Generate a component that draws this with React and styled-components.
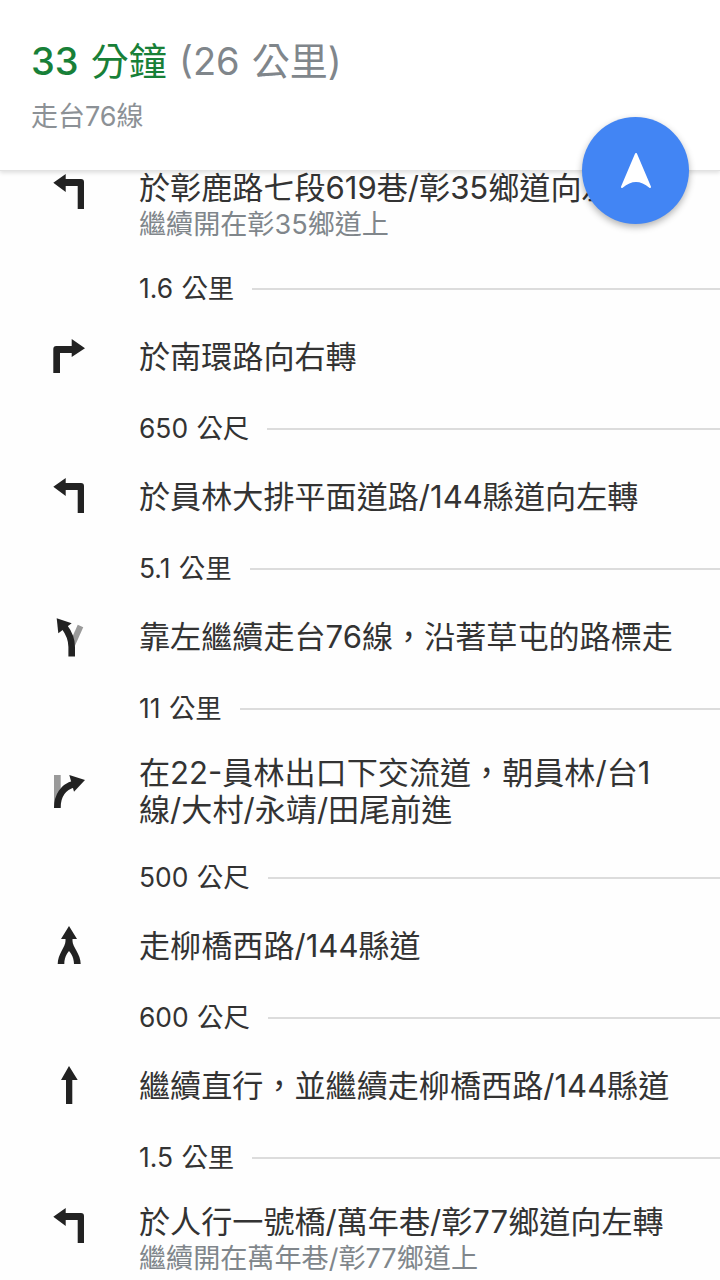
import React from 'react';
import styled, { createGlobalStyle } from 'styled-components';

const GlobalStyle = createGlobalStyle`
	html, body {
		margin: 0;
		padding: 0;
		background: #fefefe;
	}
	body {
		font-family: Inter, "Noto Sans CJK TC", sans-serif;
	}
`;

const steps = [
	{ id: 1, type: 'left', title: '於彰鹿路七段619巷/彰35鄉道向左轉', sub: '繼續開在彰35鄉道上', distance: '1.6 公里', first: true },
	{ id: 2, type: 'right', title: '於南環路向右轉', distance: '650 公尺' },
	{ id: 3, type: 'left', title: '於員林大排平面道路/144縣道向左轉', distance: '5.1 公里' },
	{ id: 4, type: 'keepLeft', title: '靠左繼續走台76線，沿著草屯的路標走', distance: '11 公里' },
	{ id: 5, type: 'exitRight', title: '在22-員林出口下交流道，朝員林/台1線/大村/永靖/田尾前進', distance: '500 公尺' },
	{ id: 6, type: 'merge', title: '走柳橋西路/144縣道', distance: '600 公尺' },
	{ id: 7, type: 'straight', title: '繼續直行，並繼續走柳橋西路/144縣道', distance: '1.5 公里' },
	{ id: 8, type: 'left', title: '於人行一號橋/萬年巷/彰77鄉道向左轉', sub: '繼續開在萬年巷/彰77鄉道上' },
];

const TurnIcon = ({ type }) => {
	const dark = '#222';
	const grey = '#9a9a9a';
	return (
		<IconSvg viewBox="0 0 40 44">
			{type === 'left' && (
				<path
					fill={dark}
					d="M4.3 11.7 L16.7 3 V8 H32 Q35 8 35 11 V38 H28.7 V15 H16.7 V21 Z"
				/>
			)}
			{type === 'right' && (
				<path
					fill={dark}
					d="M36 13.2 L22.7 4 V11 H7.3 Q4.3 11 4.3 14 V38 H11 V18 H22.7 V22 Z"
				/>
			)}
			{type === 'keepLeft' && (
				<>
					<path d="M23 30 L31.5 11" stroke={grey} strokeWidth="6" fill="none" />
					<path d="M22.7 41.5 V32 C22.7 24 20 18 15.5 12" stroke={dark} strokeWidth="6.6" fill="none" />
					<path fill={dark} d="M7.7 3.3 L22.7 8.3 L9.3 18.3 Z" />
				</>
			)}
			{type === 'exitRight' && (
				<>
					<rect x="5" y="5" width="6.7" height="33" fill={grey} />
					<path d="M8.3 38 C8.3 26 14 17 25 14" stroke={dark} strokeWidth="6.6" fill="none" />
					<path fill={dark} d="M36 10 L20.3 5 L25 21.7 Z" />
				</>
			)}
			{type === 'merge' && (
				<path
					fill={dark}
					d="M20 2 L28 15 H23.5 V17 C23.5 23 31.7 30 31.7 40 H25 C25 32 20 27 20 27 C20 27 15.3 32 15.3 40 H8.7 C8.7 30 16.5 23 16.5 17 V15 H12 Z"
				/>
			)}
			{type === 'straight' && (
				<path fill={dark} d="M20 2 L28.7 16 H23.3 V40 H17 V16 H12 Z" />
			)}
		</IconSvg>
	);
};

const App = () => {
	return (
		<Page>
			<GlobalStyle />
			<Header>
				<Summary>
					<Duration>
						<Digits>33</Digits> 分鐘
					</Duration>{' '}
					(26 公里)
				</Summary>
				<Via>走台76線</Via>
			</Header>
			<NavButton>
				<svg width="34" height="38" viewBox="0 0 34 38">
					<path
						fill="#fff"
						stroke="#fff"
						strokeWidth="2"
						strokeLinejoin="round"
						d="M17 2 L31 35 Q24 29 17 29 Q10 29 3 35 Z"
					/>
				</svg>
			</NavButton>
			<StepList>
				{steps.map((step) => (
					<li key={step.id}>
						<Step $first={step.first}>
							<IconCell $top={!!step.sub}>
								<TurnIcon type={step.type} />
							</IconCell>
							<StepText>
								<Title>{step.title}</Title>
								{step.sub && <SubTitle>{step.sub}</SubTitle>}
							</StepText>
						</Step>
						{step.distance && (
							<DistanceRow>
								<Distance>{step.distance}</Distance>
								<Line />
							</DistanceRow>
						)}
					</li>
				))}
			</StepList>
		</Page>
	);
};

export default App;

const Page = styled.div`
	position: relative;
	width: 720px;
	height: 1280px;
	overflow: hidden;
	background: #fefefe;
`;

const Header = styled.header`
	position: relative;
	z-index: 1;
	box-sizing: border-box;
	height: 171px;
	padding: 36px 31px 0;
	background: #fff;
	border-bottom: 1px solid #e2e2e2;
	box-shadow: 0 2px 4px rgba(0, 0, 0, 0.12);
`;

const Summary = styled.div`
	font-size: 38px;
	line-height: 50px;
	word-spacing: 1.5px;
	color: #80868b;
	white-space: nowrap;
`;

const Duration = styled.span`
	color: #188038;
`;

const Digits = styled.span`
	font-weight: 500;
`;

const Via = styled.div`
	margin-top: 12px;
	font-size: 27px;
	line-height: 38px;
	color: #8c9196;
`;

const NavButton = styled.div`
	position: absolute;
	z-index: 2;
	top: 117px;
	left: 582px;
	width: 107px;
	height: 107px;
	border-radius: 50%;
	background: #4285f4;
	box-shadow: 0 3px 7px rgba(0, 0, 0, 0.3);
	display: flex;
	align-items: center;
	justify-content: center;
`;

const StepList = styled.ul`
	list-style: none;
	margin: 0;
	padding: 0;
`;

const Step = styled.div`
	box-sizing: border-box;
	display: flex;
	align-items: center;
	min-height: 80px;
	padding: ${(p) => (p.$first ? '0 44px 15px 0' : '17px 44px 18px 0')};
`;

const IconCell = styled.div`
	flex: 0 0 139px;
	box-sizing: border-box;
	padding-left: 49px;
	align-self: ${(p) => (p.$top ? 'flex-start' : 'center')};
	margin: ${(p) => (p.$top ? '0' : '-1px 0 6px')};
	height: 40px;
`;

const IconSvg = styled.svg`
	display: block;
	width: 40px;
	height: 44px;
`;

const StepText = styled.div`
	flex: 1;
	min-width: 0;
	margin: -1px 0 1px;
`;

const Title = styled.div`
	font-size: 31.1px;
	line-height: 37px;
	color: #333;
`;

const SubTitle = styled.div`
	font-size: 27.1px;
	line-height: 36px;
	color: #80868b;
`;

const DistanceRow = styled.div`
	display: flex;
	align-items: center;
	gap: 18px;
	height: 60px;
	padding-left: 139px;
`;

const Distance = styled.span`
	margin-bottom: 2px;
	font-size: 26.4px;
	line-height: 36px;
	word-spacing: 1px;
	color: #333;
	white-space: nowrap;
`;

const Line = styled.div`
	flex: 1;
	height: 2px;
	background: #dcdcdc;
`;
